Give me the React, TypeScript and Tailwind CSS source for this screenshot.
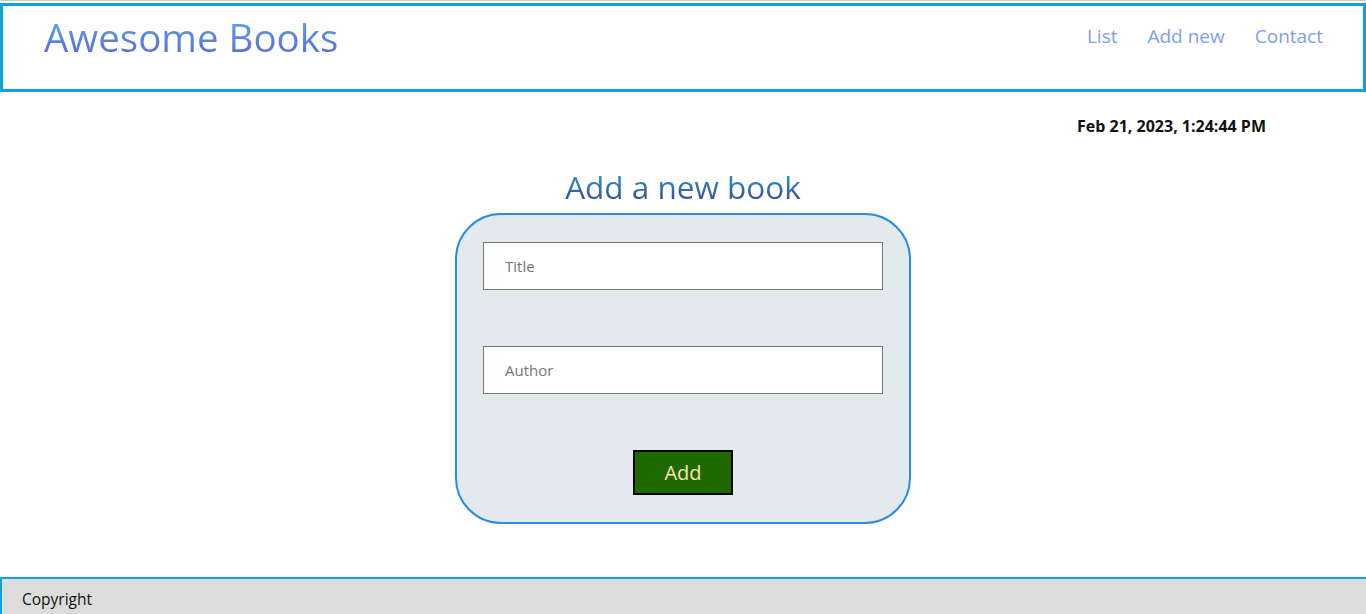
import React from "react";

const font = { fontFamily: '"Open Sans", "Noto Sans", sans-serif' };

const Header = () => {
  return (
    <header className="flex items-start justify-between border-[3px] border-[#0aa5e0] h-[89px] pl-[41px] pr-[40px]">
      <h1 className="mt-[8px] text-[38.5px] leading-[46px] bg-gradient-to-b from-[#58aee8] via-[#5b86e0] to-[#5b66d6] bg-clip-text text-transparent">
        Awesome Books
      </h1>
      <nav className="flex gap-[30px] mt-[16px] text-[19px] leading-[28px] text-[#7f9fe6]">
        <a href="#">List</a>
        <a href="#">Add new</a>
        <a href="#">Contact</a>
      </nav>
    </header>
  );
};

const AddForm = () => {
  return (
    <section className="flex flex-col items-center">
      <h2 className="text-[31.5px] leading-[40px] bg-gradient-to-b from-[#17a8d2] to-[#363c8c] bg-clip-text text-transparent">
        Add a new book
      </h2>
      <form className="mt-[6px] w-[456px] h-[311px] rounded-[46px] border-2 border-[#2a8be2] bg-[#e2eaee] flex flex-col items-center pt-[27px]">
        <input
          type="text"
          placeholder="Title"
          className="w-[400px] h-[48px] bg-white border border-[#767676] px-[21px] text-[15px] placeholder:text-[#757575] outline-none"
        />
        <input
          type="text"
          placeholder="Author"
          className="w-[400px] h-[48px] mt-[56px] bg-white border border-[#767676] px-[21px] text-[15px] placeholder:text-[#757575] outline-none"
        />
        <button
          type="button"
          className="mt-[56px] w-[100px] h-[45px] bg-[#1f6a00] border-2 border-black text-[20px] text-[#f6e3b4]"
        >
          Add
        </button>
      </form>
    </section>
  );
};

export default function App() {
  return (
    <div style={font} className="min-h-[614px] bg-white flex flex-col text-[#111]">
      <div className="h-px bg-[#c8c8c8]" />
      <div className="h-[2px]" />
      <Header />
      <div className="flex justify-end pr-[100px] mt-[24px]">
        <p className="text-[16px] font-bold leading-[20px] text-[#111]">Feb 21, 2023, 1:24:44 PM</p>
      </div>
      <main className="mt-[31px]">
        <AddForm />
      </main>
      <footer className="mt-auto h-[37px] bg-[#dcdcdc] border-t-2 border-l-2 border-[#0aa5e0] pl-[20px] pt-[6px] flex items-center">
        <span className="text-[15.5px] text-[#111]">Copyright</span>
      </footer>
    </div>
  );
}
